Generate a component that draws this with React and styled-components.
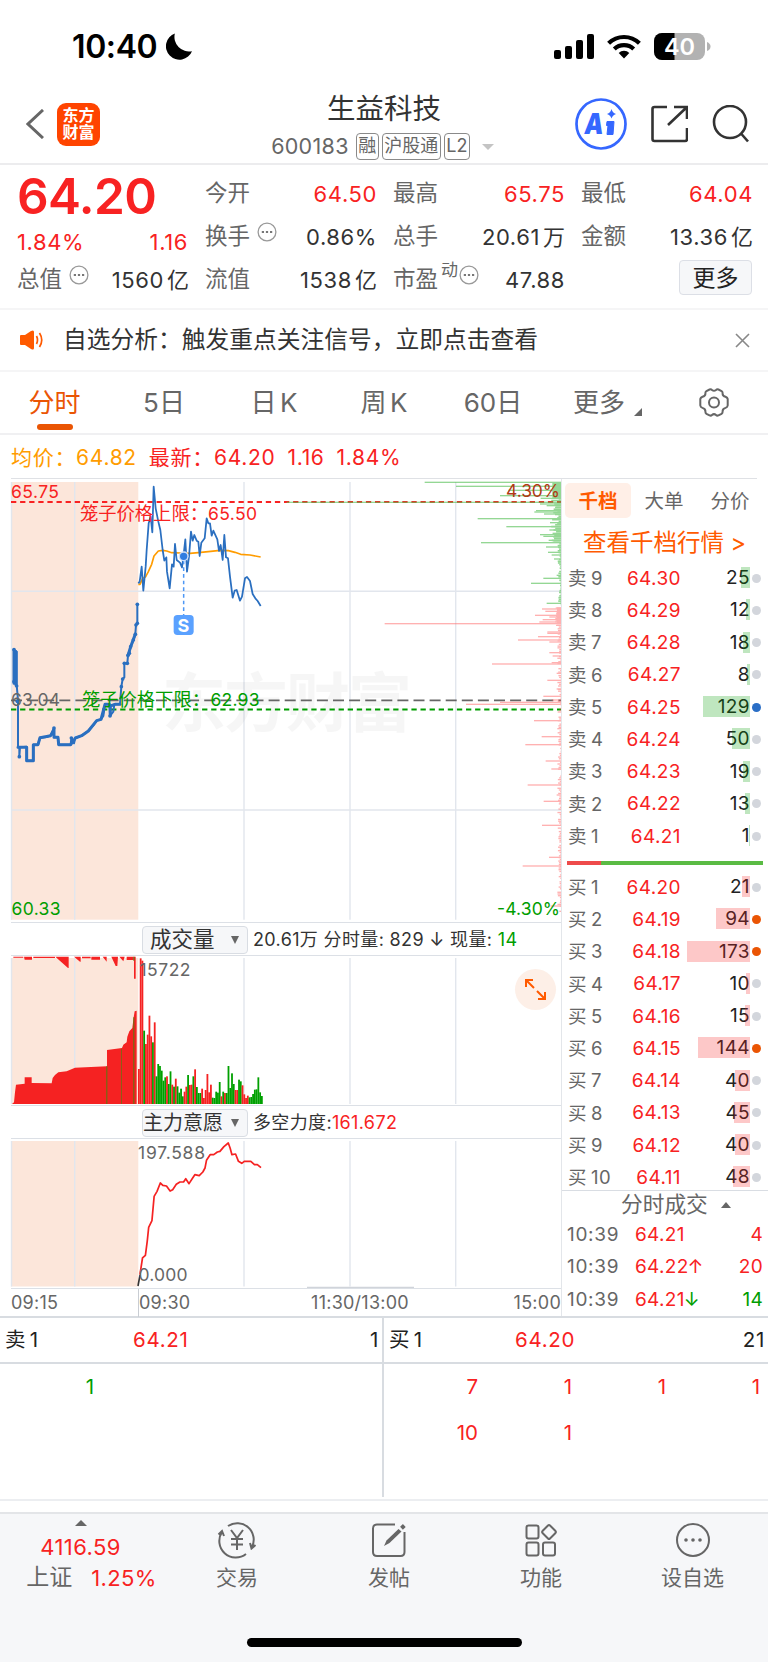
import React from "react";
import styled, { createGlobalStyle } from "styled-components";

const RED = "#f82222";
const GREEN = "#009d00";
const ORANGE = "#ff5a00";
const FONT = 'Inter, "Noto Sans CJK SC", sans-serif';

const GlobalStyle = createGlobalStyle`
  * {
    box-sizing: border-box;
  }

  body {
    margin: 0;
    background: #fff;
    color: #333;
    font-family: ${FONT};
    font-size: 20px;
    line-height: 1;
    white-space: nowrap;
  }

  svg {
    display: block;
    flex: none;
  }
`;

const Page = styled.div`
  width: 768px;
  height: 1662px;
  display: flex;
  flex-direction: column;
  overflow: hidden;
`;

/* ---------- status bar ---------- */

const StatusBar = styled.div`
  height: 88px;
  padding: 5px 57px 0 72px;
  display: flex;
  align-items: center;
  justify-content: space-between;
  color: #000;
`;

const Clock = styled.div`
  display: flex;
  align-items: center;
  gap: 9px;
  font-size: 32px;
  font-weight: 600;
  letter-spacing: -0.4px;
`;

const StatusIcons = styled.div`
  display: flex;
  align-items: center;
  gap: 13px;
`;

/* ---------- header ---------- */

const Header = styled.div`
  height: 77px;
  display: flex;
  justify-content: space-between;
  padding: 0 18px 0 26px;
  border-bottom: 2px solid #ececee;
`;

const HeaderSide = styled.div`
  display: flex;
  align-items: center;
  gap: ${(props) => props.gap}px;
  width: ${(props) => props.width}px;
  padding-bottom: 3px;
`;

const Logo = styled.div`
  width: 43px;
  height: 43px;
  border-radius: 9px;
  background: #ff4400;
  color: #fff;
  font-size: 16px;
  font-weight: 700;
  line-height: 17.5px;
  text-align: center;
  padding-top: 4px;
`;

const TitleBlock = styled.div`
  flex: 1;
  display: flex;
  flex-direction: column;
  align-items: center;
  padding-top: 5px;
`;

const Title = styled.div`
  font-size: 28.5px;
  line-height: 32px;
`;

const SubTitle = styled.div`
  display: flex;
  align-items: center;
  margin-top: 8px;
  padding-right: 3px;
  font-size: 21.5px;
  letter-spacing: 0.3px;
  color: #666;
`;

const Badge = styled.span`
  height: 27px;
  line-height: 24px;
  border: 1.5px solid #8a8a8a;
  border-radius: 4px;
  padding: 0 1.5px;
  font-size: 18px;
  letter-spacing: 0;
  margin-left: ${(props) => props.gap || 3}px;
`;

const Caret = styled.span`
  width: 0;
  height: 0;
  border-left: ${(props) => props.size || 6}px solid transparent;
  border-right: ${(props) => props.size || 6}px solid transparent;
  border-${(props) => (props.up ? "bottom" : "top")}: ${(props) => props.tall || 6}px solid ${(props) => props.color || "#666"};
  margin-left: ${(props) => props.gap || 0}px;
`;

/* ---------- quote ---------- */

const Quote = styled.div`
  height: 145px;
  padding: 7px 16px 0 17px;
  display: grid;
  grid-template-columns: repeat(4, 171px);
  column-gap: 17px;
  border-bottom: 2px solid #f5f5f6;
`;

const QuoteColumn = styled.div`
  display: flex;
  flex-direction: column;
`;

const QuoteCell = styled.div`
  height: 43px;
  display: flex;
  align-items: center;
  justify-content: space-between;
  color: ${(props) => props.color || "#333"};
  font-size: 22px;
  letter-spacing: 0.6px;
  margin-right: -1px;

  small {
    font-size: 22px;
    letter-spacing: 0;
    margin-left: 3px;
  }
`;

const Label = styled.span`
  display: flex;
  align-items: center;
  color: #666;
  font-size: 22.5px;
  letter-spacing: 0;

  svg {
    margin: -9px 0 0 7px;
  }

  sup {
    font-size: 17px;
    line-height: 17px;
    margin: -18px -6px 0 3px;
  }
`;

const BigPrice = styled.div`
  height: 60px;
  line-height: 49px;
  font-size: 49.5px;
  font-weight: 600;
  letter-spacing: -0.6px;
  color: ${RED};
`;

const SmallMove = styled.div`
  height: 26px;
  display: flex;
  align-items: center;
  justify-content: space-between;
  color: ${RED};
  font-size: 22px;
  letter-spacing: 0.6px;
  margin-top: -3px;
  margin-bottom: 3px;
`;

const MoreButton = styled.button`
  width: 73px;
  height: 35px;
  margin: -4px 1px 0 auto;
  border: 1.5px solid #dcdfe6;
  border-radius: 4px;
  background: #f6f7f9;
  color: #222;
  padding: 0;
  font: 23px ${FONT};
  line-height: 30px;
`;

/* ---------- notice and tabs ---------- */

const Notice = styled.div`
  height: 62px;
  padding: 0 18px 0 20px;
  display: flex;
  align-items: center;
  border-bottom: 2px solid #f5f5f6;
  font-size: 23.75px;

  span {
    flex: 1;
    margin-left: 19px;
  }
`;

const Tabs = styled.div`
  height: 63px;
  display: grid;
  grid-template-columns: 109px 110px 110px 110px 108px 119px 95px;
  border-bottom: 2px solid #f0f0f2;
`;

const Tab = styled.div`
  display: flex;
  flex-direction: column;
  align-items: center;
  padding-top: 16px;
  font-size: 26px;
  line-height: 29px;
  word-spacing: -4px;
  color: ${(props) => (props.active ? "#ea5504" : "#666")};

  &::after {
    content: "";
    width: 36px;
    height: 6px;
    margin-top: 7px;
    border-radius: 3px;
    background: ${(props) => (props.active ? "#ea5504" : "transparent")};
  }
`;

const TabMore = styled.span`
  display: flex;
  align-items: flex-end;
  padding-left: 2px;

  svg {
    margin: 0 0 1px 9px;
  }
`;

const Legend = styled.div`
  height: 44px;
  margin: 0 11px;
  padding-top: 2px;
  display: flex;
  align-items: center;
  font-size: 21px;
  letter-spacing: 0.7px;
  color: ${RED};
  border-bottom: 1px solid #dfe1e5;

  span {
    margin-right: 12px;
  }

  span:first-child {
    color: #ff9c00;
  }
`;

/* ---------- main area ---------- */

const Main = styled.div`
  height: 839px;
  display: flex;
  border-bottom: 2px solid #d8dce1;
`;

const Charts = styled.div`
  width: 562px;
  border-right: 1px solid #e3e6ea;
  position: relative;
`;

const IndicatorBar = styled.div`
  height: 34px;
  margin-left: 11px;
  padding: 1px 0 0 131px;
  display: flex;
  align-items: center;
  font-size: 18px;
  letter-spacing: 0.35px;
  border-top: 1px solid #dce0e6;
  border-bottom: 1px solid #dce0e6;

  em {
    font-style: normal;
    color: ${(props) => props.valueColor};
  }
`;

const Select = styled.div`
  width: 106px;
  height: 28px;
  margin-right: 5px;
  padding: 0 8px 0 ${(props) => (props.tight ? 0 : 7)}px;
  display: flex;
  align-items: center;
  justify-content: space-between;
  border: 1px solid #d9dde3;
  border-radius: 4px;
  background: #f6f7f9;
  font-size: ${(props) => (props.tight ? 20 : 21.5)}px;
  letter-spacing: 0;
`;

const TimeAxis = styled.div`
  height: 27px;
  margin-left: 11px;
  display: grid;
  grid-template-columns: 127px 155px 134px 134px;
  align-items: center;
  font-size: 18px;
  letter-spacing: 0.25px;
  color: #666;
  border-top: 1px solid #dce0e6;

  span {
    line-height: 28px;
  }

  span:nth-child(2) {
    border-left: 1px solid #c9cdd3;
  }

  span:nth-child(3) {
    justify-self: center;
  }

  span:nth-child(4) {
    justify-self: end;
  }
`;

const ExpandButton = styled.div`
  position: absolute;
  left: 515px;
  top: 490px;
  width: 41px;
  height: 41px;
  border-radius: 50%;
  background: #fdefe7;
  display: flex;
  align-items: center;
  justify-content: center;
`;

/* ---------- order book ---------- */

const Book = styled.div`
  flex: 1;
  display: flex;
  flex-direction: column;
`;

const BookTabs = styled.div`
  display: flex;
  padding: 4px 0 0 3px;
`;

const BookTab = styled.div`
  width: 66px;
  height: 35px;
  line-height: 36px;
  text-align: center;
  font-size: 19.5px;
  border-radius: 5px;
  font-weight: ${(props) => (props.active ? 700 : 400)};
  color: ${(props) => (props.active ? ORANGE : "#666")};
  background: ${(props) => (props.active ? "#ffefe7" : "none")};
`;

const BookLink = styled.div`
  height: 44px;
  line-height: 49px;
  padding-left: 21px;
  font-size: 23.5px;
  color: ${ORANGE};
`;

const Level = styled.div`
  height: 32.27px;
  display: grid;
  grid-template-columns: 50px 63px 69px 16px;
  align-items: center;
  margin-left: 6px;
  font-size: 19px;
  letter-spacing: 0.4px;
  color: #222;
`;

const LevelName = styled.span`
  color: #666;
  font-size: 18.5px;
  word-spacing: -1.5px;
`;

const Price = styled.span`
  color: ${RED};
  text-align: right;
`;

const Quantity = styled.span`
  position: relative;
  height: 22px;
  line-height: 22px;
  text-align: right;
`;

const DepthBar = styled.i`
  position: absolute;
  right: 0;
  top: 0;
  height: 21px;
  background: ${(props) => (props.sell ? "rgba(0, 157, 0, 0.25)" : "rgba(248, 34, 34, 0.25)")};
`;

const Dot = styled.span`
  width: 9px;
  height: 9px;
  margin-left: 2px;
  border-radius: 50%;
  background: ${(props) => props.color || "#d3d6dc"};
`;

const Ratio = styled.div`
  height: 4px;
  margin: 9px 5px 5.5px;
  background: linear-gradient(100deg, #ee4b4b 17.5%, #5abb44 17.6%);
`;

const TradesTitle = styled.div`
  display: flex;
  align-items: center;
  height: 29px;
  margin-top: -4px;
  padding-left: 59px;
  border-top: 1px solid #d9dde3;
  font-size: 21.7px;
  color: #666;
`;

const Trade = styled.div`
  height: 32.3px;
  display: grid;
  grid-template-columns: 68px 66px 62px;
  align-items: center;
  margin-left: 5px;
  font-size: 19px;
  letter-spacing: 0.3px;
  color: ${RED};

  span:first-child {
    color: #666;
    letter-spacing: 0.7px;
  }

  b {
    font-weight: 400;
    margin-left: -1px;
    color: ${(props) => (props.down ? GREEN : RED)};
  }

  span:last-child {
    text-align: right;
    color: ${(props) => (props.down ? GREEN : RED)};
  }
`;

/* ---------- queue ---------- */

const Queue = styled.div`
  height: 183px;
  display: grid;
  grid-template-columns: 384px 384px;
  border-bottom: 2px solid #eceef1;
`;

const QueueSide = styled.div`
  border-right: ${(props) => (props.divider ? "2px solid #d8dce1" : "none")};
  margin-bottom: 2px;
`;

const QueueHead = styled.div`
  height: 46px;
  padding: 0 3px 0 5px;
  display: grid;
  grid-template-columns: ${(props) => props.first}px 1fr auto;
  align-items: center;
  border-bottom: 2px solid #d8dce1;
  color: #222;
  font-size: 20.5px;
  letter-spacing: 0.7px;
  word-spacing: -3px;

  span:nth-child(2) {
    color: ${RED};
  }
`;

const QueueGrid = styled.div`
  display: grid;
  grid-template-columns: repeat(4, 94px);
  grid-auto-rows: 46px;
  align-items: center;
  text-align: right;
  font-size: 20.5px;
  color: ${(props) => props.color};
`;

/* ---------- bottom nav ---------- */

const Nav = styled.div`
  flex: 1;
  margin-top: 11px;
  border-top: 2px solid #e3e5e8;
  background: #f6f7f9;
  display: flex;
  flex-direction: column;
  align-items: center;
  justify-content: space-between;
  padding-bottom: 15px;
`;

const NavItems = styled.div`
  width: 768px;
  display: grid;
  grid-template-columns: 161px 152px 152px 152px 151px;
`;

const NavItem = styled.div`
  display: flex;
  flex-direction: column;
  align-items: center;
  padding-top: 6px;
  font-size: 21px;
  color: #666;

  svg {
    margin-bottom: 3px;
  }
`;

const NavLabel = styled.div`
  line-height: 30px;
`;

const IndexQuote = styled(NavItem)`
  strong {
    font-weight: 400;
    color: ${RED};
    font-size: 22px;
    line-height: 30px;
    letter-spacing: 0.4px;
    margin-top: 6px;
  }

  div {
    display: flex;
    align-items: center;
    gap: 19px;
    height: 31px;
    padding-left: 22px;
    font-size: 23px;
  }

  div strong {
    margin: 0;
  }
`;

const HomeBar = styled.div`
  width: 275px;
  height: 9px;
  border-radius: 5px;
  background: #000;
`;

/* ---------- data ---------- */

const SELLS = [
  [9, "64.30", 25],
  [8, "64.29", 12],
  [7, "64.28", 18],
  [6, "64.27", 8],
  [5, "64.25", 129, "#2a6ec6"],
  [4, "64.24", 50],
  [3, "64.23", 19],
  [2, "64.22", 13],
  [1, "64.21", 1],
];

const BUYS = [
  [1, "64.20", 21],
  [2, "64.19", 94, "#ea5504"],
  [3, "64.18", 173, "#ea5504"],
  [4, "64.17", 10],
  [5, "64.16", 15],
  [6, "64.15", 144, "#ea5504"],
  [7, "64.14", 40],
  [8, "64.13", 45],
  [9, "64.12", 40],
  [10, "64.11", 48],
];

// chart series are kept in thirds of a pixel, origin at the left edge of the page
const AUCTION =
  "42,539 42,635 44,635 46,545 50,545 50,645 54,690 54,832 58,832 58,860 60,832 80,830 80,872 100,872 100,824 114,824 120,803 140,801 152,796 162,774 162,802 174,802 176,824 212,824 214,804 222,820 226,804 245,797 265,783 280,766 290,752 303,748 310,738 315,703 328,703 330,738 340,725 343,703 360,703 364,650 368,627 373,622 373,580 382,580 384,556 388,550 392,530 400,512 406,492 408,465 412,460 412,403";
const PRICE =
  "415,340 419,335 425,290 430,362 437,290 440,240 446,160 452,140 457,187 461,50 467,115 475,155 481,180 488,240 493,272 499,262 501,305 509,355 516,283 521,290 525,222 530,270 540,278 546,292 550,262 556,208 561,305 567,260 573,185 578,212 583,195 590,212 595,215 599,258 604,218 614,205 620,145 625,160 630,160 635,197 640,182 652,208 657,243 662,225 668,270 673,195 678,262 684,265 690,320 698,383 704,362 710,360 720,392 726,380 735,325 741,321 750,333 758,372 766,385 773,393 782,408";
const AVERAGE =
  "415,343 420,343 428,325 437,320 445,305 455,283 462,258 475,243 488,241 500,243 515,248 540,249 570,250 595,248 625,245 660,241 685,242 705,247 722,253 750,255 782,261";

// single auction ticks, drawn as dots on top of the line
const TICKS = [
  [42, 539], [46, 545], [42, 635], [50, 648], [52, 694], [58, 860], [162, 774], [214, 804], [330, 738], [364, 650],
  [368, 627], [373, 580], [382, 580], [384, 556], [388, 550], [392, 530], [400, 510], [406, 493], [408, 465],
  [412, 460], [412, 403],
];

// [y, length] of the longer orders on each side of the depth profile
const ASK_DEPTH = [
  [37, 411], [49, 317], [61, 160], [77, 185], [85, 63], [97, 825], [102, 65], [107, 45], [122, 77], [126, 82],
  [132, 53], [146, 252], [158, 35], [170, 166], [180, 37], [194, 65], [199, 55], [211, 39], [218, 242], [231, 47],
  [247, 41], [255, 30], [267, 23], [316, 15], [325, 55], [340, 92], [400, 45],
];
const BID_DEPTH = [
  [417, 59], [424, 49], [436, 80], [441, 37], [449, 57], [456, 67], [461, 531], [486, 43], [490, 43], [500, 71],
  [510, 131], [516, 37], [548, 37], [558, 27], [578, 30], [582, 209], [610, 15], [631, 43], [657, 15], [679, 55],
  [690, 30], [697, 185], [703, 287], [752, 83], [776, 13], [800, 60], [824, 109], [873, 48], [897, 31], [945, 102],
  [975, 15], [994, 54], [1066, 59], [1162, 38], [1188, 117], [1308, 33],
];

const noise = (i) => Math.abs(Math.sin(i * 12.9898) * 43758.5453) % 1;

const VOLUMES =
  "465r 133r 140r 350g 390r 362r 305r 367r 385g 325r 487g 450g 456g 470g 500g 490g 487r 510g 472g 512r 518g 494r 517g 536g 524g 547g 533r 518r 483g 513r 512r 487g 466r 519g 537g 537g 524r 552r 528r 480r 535r 512r 551g 552g 533g 536g 504g 547r 533g 537r 537g 456g 522g 478g 510g 528r 528r 497g 502g 514r 541r 552r 545r 550g 549g 540g 527g 526g 490g 535g 546g".split(" ");

const WILL =
  "385,530 392,480 400,472 405,430 409,388 418,368 424,295 432,280 441,255 448,262 458,264 468,279 475,275 485,259 495,252 505,252 511,242 520,257 530,240 536,230 548,233 558,222 564,210 568,187 578,170 588,170 598,162 605,160 616,146 628,135 633,150 638,170 648,168 656,190 665,196 672,190 690,190 700,200 708,200 718,209";

/* ---------- charts ---------- */

const Grid = ({ top, bottom }) => (
  <g>
    <rect x="11" y={top} width="127.3" height={bottom - top} fill="#fce6da" />
    <path
      d={[11.5, 74.7, 244, 350, 455.7].map((x) => `M${x} ${top}V${bottom}`).join("")}
      stroke="#e2e6ed"
      strokeWidth="1.4"
    />
  </g>
);

const PriceChart = () => (
  <svg width="561" height="443" viewBox="0 479 561 443" fontFamily={FONT} fontSize="17.5">
    <Grid top={482} bottom={919.7} />
    <path d="M11 591.3H561M11 810H561" stroke="#e2e6ed" strokeWidth="1.4" />
    <text x="162" y="726" fontSize="64" fontWeight="700" fill="#000" opacity="0.03" textLength="250">东方财富</text>
    <path d="M11 700.3H561" stroke="#666" strokeWidth="1.8" strokeDasharray="11 5.1" />
    <path d="M11 709.5H561" stroke={GREEN} strokeWidth="1.8" strokeDasharray="5.3 3.8" />
    <path d="M11 502H561" stroke={RED} strokeWidth="2" strokeDasharray="5.3 3.8" />
    <g transform="translate(0 470) scale(0.33333)" fill="none" strokeLinejoin="round">
      <polyline points={AVERAGE} stroke="#ff9c00" strokeWidth="5" />
      <polyline points={PRICE} stroke="#2a6fc0" strokeWidth="5.3" />
      <polyline points={AUCTION} stroke="#2a6fc0" strokeWidth="6" strokeLinecap="round" />
      <polyline points="54,832 80,832 80,872 100,872 100,824 114,824 120,803 152,797 162,778 162,802 174,802 176,824 212,824 226,804 245,797 265,783 290,752 303,748 315,703 328,703" stroke="#2a6fc0" strokeWidth="9" strokeLinecap="round" />
      <path d="M42 539V640M48 545V645M331 735V708L345 703H360M384 556L392 530L406 492" stroke="#2a6fc0" strokeWidth="9" strokeLinecap="round" />
      {TICKS.map(([x, y]) => (
        <circle key={`${x}-${y}`} cx={x} cy={y} r="5.5" fill="#2a6fc0" />
      ))}
      <path d="M551 272V435" stroke="#4d97f5" strokeWidth="4.5" strokeDasharray="11 9" />
      <circle cx="551" cy="259" r="13" fill="#2f7de0" stroke="#cfe1fb" strokeWidth="4" />
      <rect x="521" y="435" width="60" height="60" rx="11" fill="#5aa1ff" />
    </g>
    <text x="177.5" y="632" fontSize="18" fontWeight="700" fill="#fff">S</text>
    <g transform="translate(270 470) scale(0.33333)">
      <g fill="#54c054" opacity="0.62">
        <rect x="847" y="36" width="28" height="48" />
        {ASK_DEPTH.map(([y, len]) => (
          <rect key={y} x={875 - len} y={y - 2} width={len} height="4" />
        ))}
        {Array.from({ length: 62 }, (_, i) => {
          const y = 84 + i * 5.2;
          const len = y < 215 ? 9 + noise(i) * 24 : 2 + noise(i) * 10;
          return <rect key={i} x={875 - len} y={y} width={len} height="5" />;
        })}
      </g>
      <g fill="#ff6b6b" opacity="0.52">
        <rect x="861" y="412" width="14" height="50" />
        {BID_DEPTH.map(([y, len]) => (
          <rect key={y} x={875 - len} y={y - 2} width={len} height="4" />
        ))}
        {Array.from({ length: 176 }, (_, i) => {
          const len = (i < 12 ? 8 : 1) + noise(i + 90) * 12;
          return <rect key={i} x={875 - len} y={412 + i * 5.2} width={len} height="4" />;
        })}
      </g>
    </g>
    <text x="11" y="497.5" fill={RED} textLength="48">65.75</text>
    <text x="506" y="497" fill="#b03a14" textLength="54">4.30%</text>
    <text x="80" y="519.5" fontSize="18.3" fill={RED}>笼子价格上限：</text>
    <text x="208" y="519.5" fill={RED} textLength="49">65.50</text>
    <text x="11" y="706" fill="#666" textLength="49">63.04</text>
    <text x="82" y="706" fontSize="18.3" fill={GREEN}>笼子价格下限：</text>
    <text x="210.5" y="706" fill={GREEN} textLength="49">62.93</text>
    <text x="11.5" y="914.5" fill={GREEN} textLength="49">60.33</text>
    <text x="497" y="914.5" fill={GREEN} textLength="63">-4.30%</text>
  </svg>
);

const VolumeChart = () => (
  <svg width="561" height="149" viewBox="0 957 561 149" fontFamily={FONT} fontSize="17.5">
    <Grid top={959} bottom={1105} />
    <g transform="translate(0 915) scale(0.33333)" fill="#f52222">
      <path d="M36 570L42 565L45 535L48 512L74 509V490H95V507L155 508L158 492L165 483L175 475L200 472L225 461L321 457V408L366 402L370 392L380 385L382 368L388 352L397 342L401 310L404 292L410 290V570Z" />
      <path d="M40 128H70V131H40ZM72 128H96V137H74ZM100 128H165V132H100ZM166 128L204 162H206V128ZM222 128L240 143H242V128ZM246 128H272V133H246ZM274 128V137H300V128ZM308 128L320 143V128ZM334 128L347 156H352L354 128ZM358 128L370 142L374 128ZM380 128V138H401V128ZM402 128V194H407V128Z" />
      <path d="M319 457H322V570H319ZM363 404H365V570H363ZM400 310H403V570H400ZM400 128H403V140H400Z" fill="#5a7a10" />
      {VOLUMES.map((bar, i) => {
        const top = parseInt(bar, 10);
        return (
          <rect
            key={i}
            x={414 + i * 5.27}
            y={top}
            width="5.4"
            height={570 - top}
            fill={bar.endsWith("g") ? "#00a000" : "#f52222"}
          />
        );
      })}
    </g>
    <text x="139.5" y="976.5" fill="#666" textLength="51">15722</text>
  </svg>
);

const WillChart = () => (
  <svg width="561" height="149" viewBox="0 1141 561 149" fontFamily={FONT} fontSize="17.5">
    <Grid top={1143} bottom={1288.5} />
    <path d="M138 1288L140 1277" stroke="#333" strokeWidth="1.6" />
    <g transform="translate(0 1100) scale(0.36351 0.33333)" fill="none">
      <polyline points={WILL} stroke="#f52222" strokeWidth="1.7" vectorEffect="non-scaling-stroke" strokeLinejoin="round" />
    </g>
    <text x="138" y="1161" fill="#666" textLength="67">197.588</text>
    <text x="138.5" y="1283" fill="#666" textLength="49">0.000</text>
    <path d="M307 1289.5H414" stroke="#d0d4da" strokeWidth="1.5" />
  </svg>
);

/* ---------- small drawings ---------- */

const InfoIcon = () => (
  <svg width="20" height="20" viewBox="0 0 20 20">
    <circle cx="10" cy="10" r="8.9" fill="none" stroke="#999" strokeWidth="1.3" />
    <path d="M4.8 10H7M8.9 10H11.1M13 10H15.2" stroke="#777" strokeWidth="1.9" />
  </svg>
);

const Signal = () => (
  <svg width="40" height="26" viewBox="0 0 40 26">
    <rect x="0" y="16" width="7" height="9" rx="2" />
    <rect x="11" y="12" width="7" height="13" rx="2" />
    <rect x="22" y="6" width="7" height="19" rx="2" />
    <rect x="33" y="0" width="7" height="25" rx="2" />
  </svg>
);

const Wifi = () => (
  <svg width="34" height="25" viewBox="0 0 34 25" fill="none" stroke="#000" strokeWidth="4.2">
    <path d="M1.6 9.3A22 22 0 0 1 32.4 9.3" />
    <path d="M7.3 15A14 14 0 0 1 26.7 15" />
    <path d="M17 24.5L11.7 19.1A7.4 7.4 0 0 1 22.3 19.1Z" fill="#000" stroke="none" />
  </svg>
);

const Battery = () => (
  <svg width="57" height="28" viewBox="0 0 57 28">
    <rect width="51" height="27" rx="8" fill="#b2b2b2" />
    <path d="M20.5 0H8A8 8 0 0 0 0 8V19A8 8 0 0 0 8 27H20.5Z" />
    <path d="M53 9Q56.5 10.5 56.5 13.5T53 18Z" fill="#b2b2b2" />
    <text x="25.5" y="22" textAnchor="middle" fontFamily={FONT} fontSize="23.5" fontWeight="600" fill="#fff">40</text>
  </svg>
);

const BookRow = ({ side, level }) => {
  const [n, price, qty, dot] = level;
  return (
    <Level>
      <LevelName>{side} {n}</LevelName>
      <Price>{price}</Price>
      <Quantity>
        {qty}
        <DepthBar sell={side === "卖" ? 1 : undefined} style={{ width: Math.max(qty * 0.363, 0.6) }} />
      </Quantity>
      <Dot color={dot} />
    </Level>
  );
};

const App = () => (
  <Page>
    <GlobalStyle />
    <StatusBar>
      <Clock>
        10:40
        <svg width="26" height="27" viewBox="0 0 25 26">
          <path d="M8.5 0.5A13 13 0 1 0 25 17.5A14 14 0 0 1 8.5 0.5Z" />
        </svg>
      </Clock>
      <StatusIcons>
        <Signal />
        <Wifi />
        <Battery />
      </StatusIcons>
    </StatusBar>

    <Header>
      <HeaderSide gap={13} width={167}>
        <svg width="18" height="30" viewBox="0 0 18 30" fill="none" stroke="#666" strokeWidth="3">
          <path d="M17 1L2 15L17 29" />
        </svg>
        <Logo>东方<br />财富</Logo>
      </HeaderSide>
      <TitleBlock>
        <Title>生益科技</Title>
        <SubTitle>
          600183
          <Badge gap={7}>融</Badge>
          <Badge>沪股通</Badge>
          <Badge>L2</Badge>
          <Caret gap={12} color="#c4c4c4" />
        </SubTitle>
      </TitleBlock>
      <HeaderSide gap={24} width={175}>
        <svg width="52" height="52" viewBox="0 0 52 52">
          <circle cx="26" cy="26" r="24.5" fill="none" stroke="#3567ff" strokeWidth="2.7" />
          <text x="9" y="36.5" fontFamily={FONT} fontSize="29" fontWeight="900" fill="#3567ff" transform="skewX(-7) translate(4 0)" textLength="19" lengthAdjust="spacingAndGlyphs">A</text>
          <path d="M32 23.5H39L38 36.5H32L33 27.5H31.5Z" fill="#3567ff" strokeLinejoin="round" stroke="#3567ff" />
          <path d="M36.5 11Q37.5 15 41 16Q37.5 17 36.5 20.5Q35.5 17 32 16Q35.5 15 36.5 11Z" fill="#3567ff" />
        </svg>
        <svg width="37" height="38" viewBox="0 0 37 38" fill="none" stroke="#333" strokeWidth="2.6">
          <path d="M16 2H3.5Q1.5 2 1.5 4V34Q1.5 36 3.5 36H34Q36 36 36 34V23M23 2H36V14M36 2L17 20" />
        </svg>
        <svg width="38" height="38" viewBox="0 0 38 38" fill="none" stroke="#333" strokeWidth="2.6">
          <circle cx="18" cy="17" r="16" />
          <path d="M29 28.5L36 36.5" />
        </svg>
      </HeaderSide>
    </Header>

    <Quote>
      <QuoteColumn>
        <BigPrice>64.20</BigPrice>
        <SmallMove><span>1.84%</span><span>1.16</span></SmallMove>
        <QuoteCell><Label>总值<InfoIcon /></Label><span>1560<small>亿</small></span></QuoteCell>
      </QuoteColumn>
      <QuoteColumn>
        <QuoteCell color={RED}><Label>今开</Label>64.50</QuoteCell>
        <QuoteCell><Label>换手<InfoIcon /></Label>0.86%</QuoteCell>
        <QuoteCell><Label>流值</Label><span>1538<small>亿</small></span></QuoteCell>
      </QuoteColumn>
      <QuoteColumn>
        <QuoteCell color={RED}><Label>最高</Label>65.75</QuoteCell>
        <QuoteCell><Label>总手</Label><span>20.61<small>万</small></span></QuoteCell>
        <QuoteCell><Label>市盈<sup>动</sup><InfoIcon /></Label>47.88</QuoteCell>
      </QuoteColumn>
      <QuoteColumn>
        <QuoteCell color={RED}><Label>最低</Label>64.04</QuoteCell>
        <QuoteCell><Label>金额</Label><span>13.36<small>亿</small></span></QuoteCell>
        <QuoteCell><MoreButton>更多</MoreButton></QuoteCell>
      </QuoteColumn>
    </Quote>

    <Notice>
      <svg width="24" height="20" viewBox="0 0 24 20">
        <path d="M0 6Q0 5 1 5H5L11 1Q14 -0.5 14 2V18Q14 20.5 11 19L5 15H1Q0 15 0 14Z" fill={ORANGE} />
        <path d="M16.5 6Q18.5 10 16.5 14M19.5 3Q24 10 19.5 17" fill="none" stroke={ORANGE} strokeWidth="1.7" />
      </svg>
      <span>自选分析：触发重点关注信号，立即点击查看</span>
      <svg width="15" height="15" viewBox="0 0 15 15" stroke="#888" strokeWidth="1.6">
        <path d="M1 1L14 14M14 1L1 14" />
      </svg>
    </Notice>

    <Tabs>
      <Tab active={1}>分时</Tab>
      <Tab>5日</Tab>
      <Tab>日 K</Tab>
      <Tab>周 K</Tab>
      <Tab>60日</Tab>
      <Tab>
        <TabMore>
          更多
          <svg width="8" height="8" viewBox="0 0 8 8"><path d="M8 0V8H0Z" fill="#666" /></svg>
        </TabMore>
      </Tab>
      <Tab>
        <svg width="30" height="29" viewBox="0 0 30 29" fill="none" stroke="#666" strokeWidth="2">
          <path d="M10.5 1.5Q12 1 13 2Q15 3.6 17 2Q18 1 19.5 1.5L22.5 3Q23.8 4 23.6 5.5Q23.5 8 26.5 8.7Q28.5 9.5 28.7 11V17.5Q28.5 19.2 26.5 19.9Q23.5 20.8 23.6 23.3Q23.8 25 22.5 25.8L19.5 27.4Q18 28 17 27Q15 25.2 13 27Q12 28 10.5 27.4L7.5 25.8Q6.2 25 6.4 23.3Q6.5 20.8 3.5 19.9Q1.5 19.2 1.3 17.5V11Q1.5 9.5 3.5 8.7Q6.5 8 6.4 5.5Q6.2 4 7.5 3Z" />
          <circle cx="15" cy="14.4" r="5" />
        </svg>
      </Tab>
    </Tabs>

    <Legend>
      <span>均价：64.82</span>
      <span>最新：64.20</span>
      <span>1.16</span>
      <span>1.84%</span>
    </Legend>

    <Main>
      <Charts>
        <PriceChart />
        <IndicatorBar valueColor={GREEN}>
          <Select>成交量 <Caret size={4.5} tall={8} /></Select>
          20.61万 分时量: 829 ↓ 现量:&nbsp;<em>14</em>
        </IndicatorBar>
        <VolumeChart />
        <IndicatorBar valueColor={RED}>
          <Select tight={1}>主力意愿 <Caret size={4.5} tall={8} /></Select>
          多空力度:<em>161.672</em>
        </IndicatorBar>
        <WillChart />
        <TimeAxis>
          <span>09:15</span>
          <span>09:30</span>
          <span>11:30/13:00</span>
          <span>15:00</span>
        </TimeAxis>
        <ExpandButton>
          <svg width="21" height="21" viewBox="0 0 21 21" fill="none" stroke={ORANGE} strokeWidth="2">
            <path d="M1 8V1H8M1 1L9 9M20 13V20H13M20 20L12 12" />
          </svg>
        </ExpandButton>
      </Charts>

      <Book>
        <BookTabs>
          <BookTab active={1}>千档</BookTab>
          <BookTab>大单</BookTab>
          <BookTab>分价</BookTab>
        </BookTabs>
        <BookLink>查看千档行情 &gt;</BookLink>
        {SELLS.map((level) => (
          <BookRow key={level[0]} side="卖" level={level} />
        ))}
        <Ratio />
        {BUYS.map((level) => (
          <BookRow key={level[0]} side="买" level={level} />
        ))}
        <TradesTitle>分时成交<Caret up={1} gap={13} size={5} tall={6} /></TradesTitle>
        <Trade><span>10:39</span><span>64.21</span><span>4</span></Trade>
        <Trade><span>10:39</span><span>64.22<b>↑</b></span><span>20</span></Trade>
        <Trade down={1}><span>10:39</span><span>64.21<b>↓</b></span><span>14</span></Trade>
      </Book>
    </Main>

    <Queue>
      <QueueSide divider={1}>
        <QueueHead first={128}><span>卖 1</span><span>64.21</span><span>1</span></QueueHead>
        <QueueGrid color={GREEN}><span>1</span></QueueGrid>
      </QueueSide>
      <QueueSide>
        <QueueHead first={126}><span>买 1</span><span>64.20</span><span>21</span></QueueHead>
        <QueueGrid color={RED}>
          {[7, 1, 1, 1, 10, 1].map((n, i) => (
            <span key={i}>{n}</span>
          ))}
        </QueueGrid>
      </QueueSide>
    </Queue>

    <Nav>
      <NavItems>
        <IndexQuote>
          <Caret up={1} />
          <strong>4116.59</strong>
          <div>上证<strong>1.25%</strong></div>
        </IndexQuote>
        <NavItem>
          <svg width="40" height="40" viewBox="0 0 40 40" fill="none" stroke="#666" strokeWidth="2">
            <path d="M11 6A16.5 16.5 0 0 1 35 27M38.5 25L34.5 28.5L33 23M29 34A16.5 16.5 0 0 1 5 12M1.5 14.5L5 11L7 16" />
            <path d="M14 10L20 18L26 10M20 18V30M14 19H26M14 24.5H26" />
          </svg>
          <NavLabel>交易</NavLabel>
        </NavItem>
        <NavItem>
          <svg width="36" height="40" viewBox="0 0 36 40" fill="none" stroke="#666" strokeWidth="2">
            <path d="M24 4.5H6Q2 4.5 2 8.5V32Q2 36 6 36H29.5Q33.5 36 33.5 32V12" />
            <path d="M27.5 9L30.5 11.5L18.5 23L13 26L15.5 20.500Z" fill="#666" stroke="none" />
            <path d="M30.5 8.2L33.3 5.5" strokeWidth="4" />
          </svg>
          <NavLabel>发帖</NavLabel>
        </NavItem>
        <NavItem>
          <svg width="32" height="40" viewBox="0 0 32 40" fill="none" stroke="#666" strokeWidth="2">
            <rect x="1.5" y="5.5" width="12" height="13" rx="2" />
            <rect x="1.5" y="22.5" width="12" height="13" rx="2" />
            <rect x="18" y="22.5" width="12" height="13" rx="2" />
            <path d="M23 5.5Q24 4.5 25 5.5L30.5 11Q31.3 12 30.5 13L25 18.5Q24 19.5 23 18.5L17.5 13Q16.7 12 17.5 11Z" />
          </svg>
          <NavLabel>功能</NavLabel>
        </NavItem>
        <NavItem>
          <svg width="36" height="40" viewBox="0 0 36 40" fill="none" stroke="#666" strokeWidth="2">
            <circle cx="18" cy="20" r="16" />
            <path d="M11 20H11.01M18 20H18.01M25 20H25.01" strokeWidth="3.6" strokeLinecap="round" />
          </svg>
          <NavLabel>设自选</NavLabel>
        </NavItem>
      </NavItems>
      <HomeBar />
    </Nav>
  </Page>
);

export default App;
